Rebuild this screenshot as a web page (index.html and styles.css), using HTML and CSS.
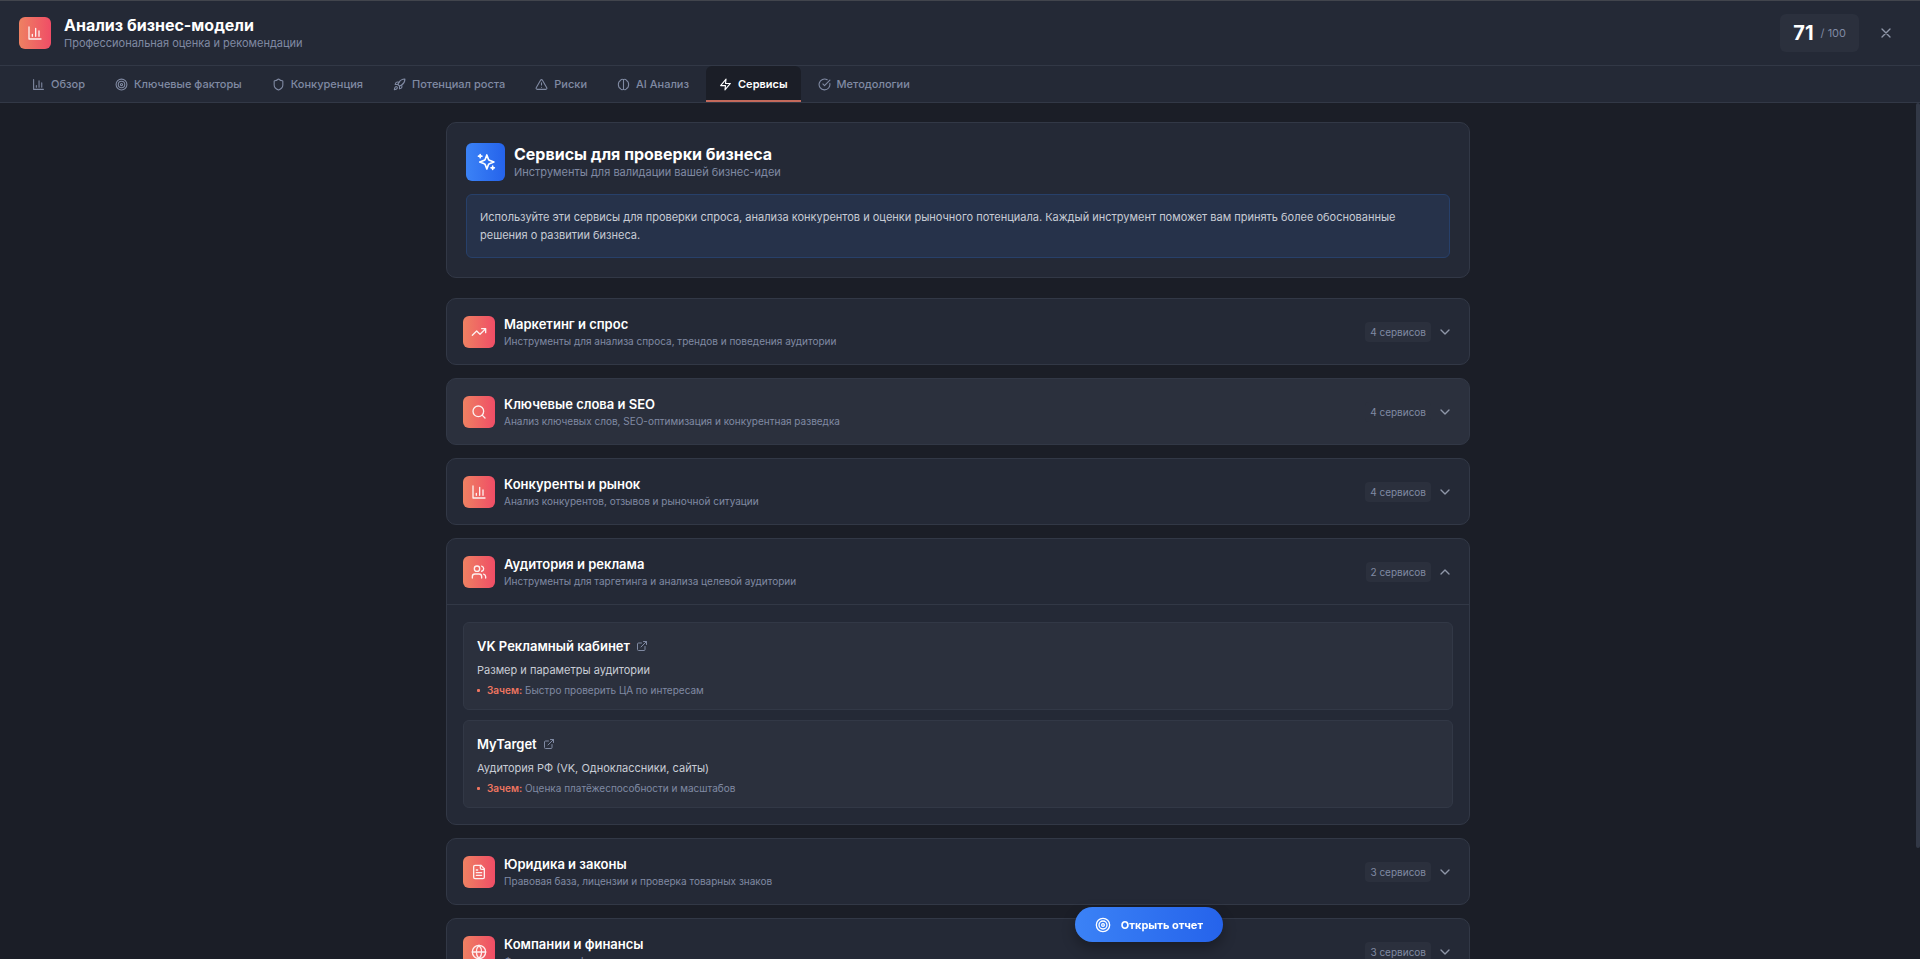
FILE: index.html
```html
<!DOCTYPE html>
<html lang="ru">
<head>
<meta charset="utf-8">
<title>Анализ бизнес-модели</title>
<link rel="stylesheet" href="styles.css">
</head>
<body>
<svg class="sprite" aria-hidden="true">
  <symbol id="chart" viewBox="0 0 24 24"><path d="M3 3v18h18M18 17V9M13 17V5M8 17v-3"/></symbol>
  <symbol id="target" viewBox="0 0 24 24"><circle cx="12" cy="12" r="10"/><circle cx="12" cy="12" r="6"/><circle cx="12" cy="12" r="2"/></symbol>
  <symbol id="shield" viewBox="0 0 24 24"><path d="M20 13c0 5-3.5 7.5-7.66 8.95a1 1 0 0 1-.67-.01C7.5 20.5 4 18 4 13V6a1 1 0 0 1 1-1c2 0 4.5-1.2 6.24-2.72a1.17 1.17 0 0 1 1.52 0C14.51 3.81 17 5 19 5a1 1 0 0 1 1 1z"/></symbol>
  <symbol id="rocket" viewBox="0 0 24 24"><path d="M4.5 16.5c-1.5 1.26-2 5-2 5s3.74-.5 5-2c.71-.84.7-2.13-.09-2.91a2.18 2.18 0 0 0-2.91-.09z"/><path d="m12 15-3-3a22 22 0 0 1 2-3.95A12.88 12.88 0 0 1 22 2c0 2.72-.78 7.5-6 11a22.35 22.35 0 0 1-4 2z"/><path d="M9 12H4s.55-3.03 2-4c1.62-1.08 5 0 5 0M12 15v5s3.03-.55 4-2c1.08-1.62 0-5 0-5"/></symbol>
  <symbol id="warning" viewBox="0 0 24 24"><path d="m21.73 18-8-14a2 2 0 0 0-3.48 0l-8 14A2 2 0 0 0 4 21h16a2 2 0 0 0 1.73-3M12 9v4M12 17h.01"/></symbol>
  <symbol id="brain" viewBox="0 0 24 24"><path d="M12 3C9 1.500 7 3 6.500 4.500 4 5.500 2.500 9 2.500 12s1.500 6.500 4 7.500C7 21 9 22.500 12 21c3 1.500 5 0 5.500-1.500 2.500-1 4-4.500 4-7.500s-1.500-6.500-4-7.500C17 3 15 1.500 12 3zM12 3v18"/></symbol>
  <symbol id="zap" viewBox="0 0 24 24"><path d="M13 2 3 14h9l-1 8 10-12h-9z"/></symbol>
  <symbol id="check" viewBox="0 0 24 24"><path d="M21.801 10A10 10 0 1 1 17 3.335M9 11l3 3L22 4"/></symbol>
  <symbol id="close" viewBox="0 0 24 24"><path d="M18 6 6 18M6 6l12 12"/></symbol>
  <symbol id="sparkles" viewBox="0 0 24 24"><path d="M13 3.500l1.900 5.100a2 2 0 0 0 1.200 1.200L21.500 12l-5.400 2.100a2 2 0 0 0-1.200 1.200L13 20.500l-1.900-5.200a2 2 0 0 0-1.200-1.200L4.500 12l5.400-2.200a2 2 0 0 0 1.200-1.200z"/><path d="M5 3v4M3 5h4M20 17v4M18 19h4"/></symbol>
  <symbol id="trend" viewBox="0 0 24 24"><path d="M22 7l-8.500 8.500-5-5L2 17M16 7h6v6"/></symbol>
  <symbol id="search" viewBox="0 0 24 24"><circle cx="11" cy="11" r="8"/><path d="m21 21-4.300-4.300"/></symbol>
  <symbol id="users" viewBox="0 0 24 24"><path d="M16 21v-2a4 4 0 0 0-4-4H6a4 4 0 0 0-4 4v2"/><circle cx="9" cy="7" r="4"/><path d="M22 21v-2a4 4 0 0 0-3-3.870M16 3.130a4 4 0 0 1 0 7.750"/></symbol>
  <symbol id="doc" viewBox="0 0 24 24"><path d="M15 2H6a2 2 0 0 0-2 2v16a2 2 0 0 0 2 2h12a2 2 0 0 0 2-2V7z"/><path d="M14 2v4a2 2 0 0 0 2 2h4M10 9H8M16 13H8M16 17H8"/></symbol>
  <symbol id="globe" viewBox="0 0 24 24"><circle cx="12" cy="12" r="10"/><path d="M12 2a14.500 14.500 0 0 0 0 20 14.500 14.500 0 0 0 0-20M2 12h20"/></symbol>
  <symbol id="down" viewBox="0 0 24 24"><path d="m6 9 6 6 6-6"/></symbol>
  <symbol id="up" viewBox="0 0 24 24"><path d="m18 15-6-6-6 6"/></symbol>
  <symbol id="external" viewBox="0 0 24 24"><path d="M15 3h6v6M10 14 21 3M18 13v6a2 2 0 0 1-2 2H5a2 2 0 0 1-2-2V8a2 2 0 0 1 2-2h6"/></symbol>
</svg>
<div class="app">
  <header class="header">
    <span class="tile"><svg class="icon"><use href="#chart"/></svg></span>
    <div class="heading">
      <h1 class="title">Анализ бизнес-модели</h1>
      <p class="subtitle">Профессиональная оценка и рекомендации</p>
    </div>
    <div class="score"><strong class="score-value">71</strong><span class="score-max">/ 100</span></div>
    <button class="close" aria-label="Закрыть"><svg class="icon"><use href="#close"/></svg></button>
  </header>
  <nav class="tabs">
    <button class="tab"><svg class="icon icon-tab"><use href="#chart"/></svg>Обзор</button>
    <button class="tab"><svg class="icon icon-tab"><use href="#target"/></svg>Ключевые факторы</button>
    <button class="tab"><svg class="icon icon-tab"><use href="#shield"/></svg>Конкуренция</button>
    <button class="tab"><svg class="icon icon-tab"><use href="#rocket"/></svg>Потенциал роста</button>
    <button class="tab"><svg class="icon icon-tab"><use href="#warning"/></svg>Риски</button>
    <button class="tab"><svg class="icon icon-tab"><use href="#brain"/></svg>AI Анализ</button>
    <button class="tab tab-active"><svg class="icon icon-tab"><use href="#zap"/></svg>Сервисы</button>
    <button class="tab"><svg class="icon icon-tab"><use href="#check"/></svg>Методологии</button>
  </nav>
  <div class="body">
    <main class="main">
      <div class="content">
        <section class="card hero">
          <div class="hero-head">
            <span class="tile tile-blue"><svg class="icon icon-large"><use href="#sparkles"/></svg></span>
            <div class="heading">
              <h2 class="title">Сервисы для проверки бизнеса</h2>
              <p class="subtitle">Инструменты для валидации вашей бизнес-идеи</p>
            </div>
          </div>
          <p class="note">Используйте эти сервисы для проверки спроса, анализа конкурентов и оценки рыночного потенциала. Каждый инструмент поможет вам принять более обоснованные решения о развитии бизнеса.</p>
        </section>
        <div class="groups">
          <section class="card">
            <button class="group">
              <span class="tile"><svg class="icon"><use href="#trend"/></svg></span>
              <span class="group-text"><span class="group-title">Маркетинг и спрос</span><span class="group-sub">Инструменты для анализа спроса, трендов и поведения аудитории</span></span>
              <span class="badge">4 сервисов</span><svg class="icon"><use href="#down"/></svg>
            </button>
          </section>
          <section class="card card-hover">
            <button class="group">
              <span class="tile"><svg class="icon"><use href="#search"/></svg></span>
              <span class="group-text"><span class="group-title">Ключевые слова и SEO</span><span class="group-sub">Анализ ключевых слов, SEO-оптимизация и конкурентная разведка</span></span>
              <span class="badge">4 сервисов</span><svg class="icon"><use href="#down"/></svg>
            </button>
          </section>
          <section class="card">
            <button class="group">
              <span class="tile"><svg class="icon"><use href="#chart"/></svg></span>
              <span class="group-text"><span class="group-title">Конкуренты и рынок</span><span class="group-sub">Анализ конкурентов, отзывов и рыночной ситуации</span></span>
              <span class="badge">4 сервисов</span><svg class="icon"><use href="#down"/></svg>
            </button>
          </section>
          <section class="card">
            <button class="group" aria-expanded="true">
              <span class="tile"><svg class="icon"><use href="#users"/></svg></span>
              <span class="group-text"><span class="group-title">Аудитория и реклама</span><span class="group-sub">Инструменты для таргетинга и анализа целевой аудитории</span></span>
              <span class="badge">2 сервисов</span><svg class="icon"><use href="#up"/></svg>
            </button>
            <div class="services">
              <article class="service">
                <h3 class="service-title"><a class="service-link" href="#">VK Рекламный кабинет<svg class="icon icon-small"><use href="#external"/></svg></a></h3>
                <p class="service-text">Размер и параметры аудитории</p>
                <p class="service-why"><span><b class="why">Зачем:</b> Быстро проверить ЦА по интересам</span></p>
              </article>
              <article class="service">
                <h3 class="service-title"><a class="service-link" href="#">MyTarget<svg class="icon icon-small"><use href="#external"/></svg></a></h3>
                <p class="service-text">Аудитория РФ (VK, Одноклассники, сайты)</p>
                <p class="service-why"><span><b class="why">Зачем:</b> Оценка платёжеспособности и масштабов</span></p>
              </article>
            </div>
          </section>
          <section class="card">
            <button class="group">
              <span class="tile"><svg class="icon"><use href="#doc"/></svg></span>
              <span class="group-text"><span class="group-title">Юридика и законы</span><span class="group-sub">Правовая база, лицензии и проверка товарных знаков</span></span>
              <span class="badge">3 сервисов</span><svg class="icon"><use href="#down"/></svg>
            </button>
          </section>
          <section class="card">
            <button class="group">
              <span class="tile"><svg class="icon"><use href="#globe"/></svg></span>
              <span class="group-text"><span class="group-title">Компании и финансы</span><span class="group-sub">Финансовая информация о компаниях</span></span>
              <span class="badge">3 сервисов</span><svg class="icon"><use href="#down"/></svg>
            </button>
          </section>
        </div>
      </div>
    </main>
    <div class="scrollbar"><div class="scroll-thumb"></div></div>
  </div>
</div>
<button class="report"><svg class="icon"><use href="#target"/></svg>Открыть отчет</button>
</body>
</html>
```

FILE: styles.css
```css
* { box-sizing: border-box; margin: 0; }

:root {
  --bg: #1b1e27;
  --panel: #242936;
  --raised: #2b303d;
  --border: #323846;
  --muted: #808aa3;
  --text: #c8ccd5;
}

body {
  background: var(--bg);
  color: var(--text);
  font: 11px/18px Inter, "Noto Sans", sans-serif;
}

button { border: 0; background: none; color: inherit; font: inherit; text-align: left; cursor: pointer; }

.sprite { position: absolute; width: 0; height: 0; }

.icon {
  width: 16px;
  height: 16px;
  flex: none;
  fill: none;
  stroke: currentColor;
  stroke-width: 2;
  stroke-linecap: round;
  stroke-linejoin: round;
}
.icon-small { width: 12px; height: 12px; }
.icon-tab { width: 13px; height: 13px; }
.icon-large { width: 20px; height: 20px; }

.app { display: flex; flex-direction: column; height: 100vh; border-top: 1px solid #42454d; }

.header {
  display: flex;
  align-items: center;
  padding: 13px 19px;
  background: var(--panel);
  border-bottom: 1px solid var(--border);
}

.tile {
  display: grid;
  place-items: center;
  flex: none;
  width: 32px;
  height: 32px;
  border-radius: 6px;
  background: linear-gradient(90deg, #ee8162, #f04d66);
  color: #fff;
}
.tile .icon { opacity: .9; }
.tile-blue { width: 39px; height: 38px; background: linear-gradient(90deg, #3b82f6, #2563eb); }
.tile-blue .icon { opacity: 1; }

.heading { flex: 1; margin-left: 13px; }
.title { padding-top: 2px; color: #fff; font-size: 16px; line-height: 19px; font-weight: 700; }
.subtitle { color: var(--muted); font-size: 11px; line-height: 17px; }

.score { display: flex; align-items: center; gap: 7px; height: 38px; padding: 0 13px; border-radius: 6px; background: var(--raised); }
.score-value { color: #fff; font-size: 20px; }
.score-max { color: var(--muted); font-size: 11px; }
.close { display: flex; margin-left: 12px; padding: 7px; color: #8f97a9; }

.tabs { display: flex; gap: 4px; padding: 0 19px; background: var(--panel); border-bottom: 1px solid var(--border); }
.tab {
  display: flex;
  align-items: center;
  gap: 6px;
  height: 36px;
  padding: 2px 13px 0;
  border-bottom: 2px solid transparent;
  border-radius: 6px 6px 0 0;
  color: var(--muted);
  font-weight: 500;
}
.tab-active { background: var(--bg); border-bottom-color: #c46a5c; color: #fff; font-weight: 600; }

.body { display: flex; flex: 1; min-height: 0; }
.main { flex: 1; overflow: hidden; padding: 19px; }
.content { max-width: 1024px; margin: 0 auto; }
.scrollbar { width: 4px; }
.scroll-thumb { height: 87%; border-radius: 2px; background: #323846; }

.card { border: 1px solid var(--border); border-radius: 10px; background: var(--panel); }
.card-hover { background: var(--raised); }

.hero { padding: 20px 19px 19px; }
.hero-head { display: flex; align-items: center; }
.hero-head .heading { margin-left: 9px; }
.note {
  margin-top: 13px;
  padding: 13px;
  border: 1px solid #27406a;
  border-radius: 6px;
  background: #26324a;
}

.groups { display: grid; gap: 13px; margin-top: 20px; }
.group { display: flex; align-items: center; width: 100%; height: 65px; padding: 0 16px; color: #8f97a9; }
.group-text { display: grid; flex: 1; margin-left: 9px; }
.group-title { color: #fff; font-size: 13px; line-height: 18px; font-weight: 600; }
.group-sub { color: var(--muted); font-size: 10px; line-height: 16px; }
.badge { margin-right: 6px; padding: 0 5px; border-radius: 4px; background: var(--raised); color: var(--muted); font-size: 10px; line-height: 20px; }

.services { display: grid; gap: 10px; padding: 17px 16px 16px; border-top: 1px solid var(--border); }
.service { padding: 13px 13px 11px; border: 1px solid var(--border); border-radius: 6px; background: var(--raised); }
.service-title { font-size: 13px; line-height: 20px; font-weight: 600; }
.service-link { display: flex; align-items: center; gap: 6px; width: fit-content; color: #fff; text-decoration: none; }
.service-link .icon { color: var(--muted); }
.service-text { margin-top: 5px; }
.service-why { display: flex; align-items: center; gap: 7px; margin-top: 3px; color: var(--muted); font-size: 10px; line-height: 16px; }
.service-why::before { content: ""; width: 3px; height: 3px; border-radius: 1px; background: #ee7560; }
.why { color: #ee7560; font-weight: 600; }

.report {
  position: fixed;
  right: 697px;
  bottom: 17px;
  display: flex;
  align-items: center;
  gap: 10px;
  height: 35px;
  padding: 0 20px;
  border-radius: 18px;
  background: linear-gradient(90deg, #3b82f6, #2563eb);
  box-shadow: 0 6px 14px rgba(0, 0, 0, .3);
  color: #fff;
  font-weight: 700;
}
```
